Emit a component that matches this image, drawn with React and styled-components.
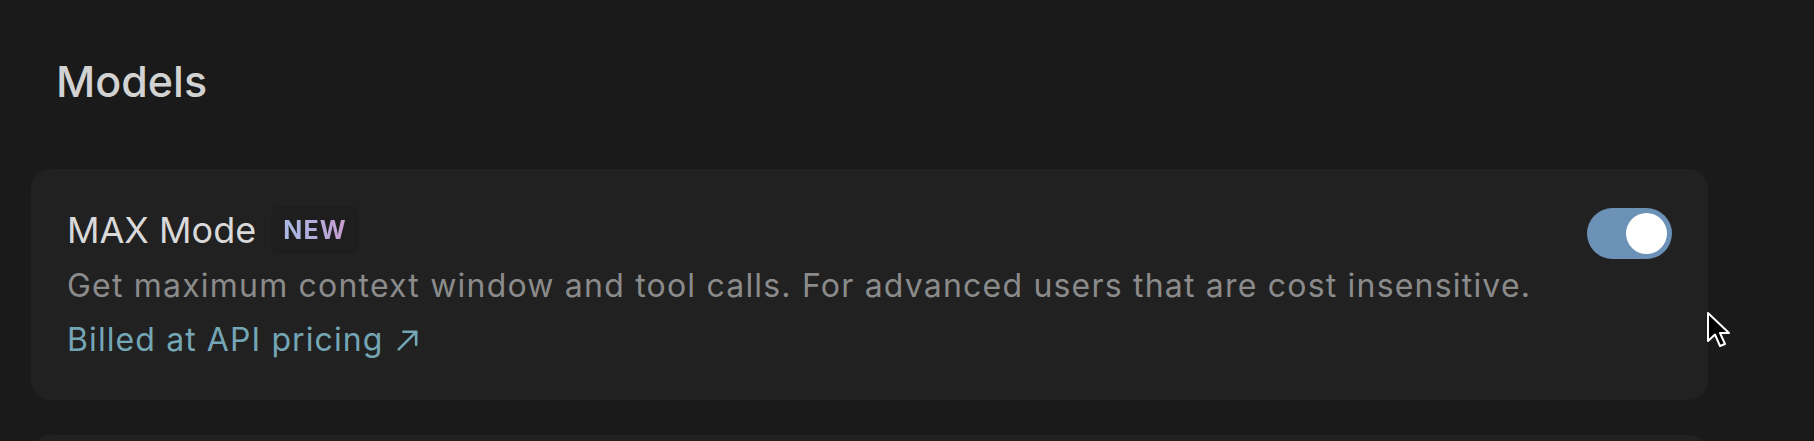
import styled, { createGlobalStyle } from "styled-components";

const GlobalStyle = createGlobalStyle`
  body {
    margin: 0;
    background: #1a1a1a;
    font-family: Inter, "Noto Sans", sans-serif;
    -webkit-font-smoothing: antialiased;
  }
`;

const Page = styled.div`
  position: relative;
  height: 441px;
  overflow: hidden;
  padding: 53px 106px 0 31px;
  box-sizing: border-box;
`;

const Heading = styled.h2`
  margin: 0 0 60px 25px;
  font-size: 43px;
  line-height: 56px;
  font-weight: 500;
  color: #d2d2d2;
`;

const Card = styled.div`
  display: flex;
  align-items: flex-start;
  justify-content: space-between;
  background: #212121;
  border-radius: 20px;
  padding: 36px 36px 33px 36px;
  margin-bottom: 35px;
  min-height: ${(p) => p.$minHeight || 0}px;
  box-sizing: border-box;
`;

const Info = styled.div`
  display: flex;
  flex-direction: column;
`;

const TitleRow = styled.div`
  display: flex;
  align-items: center;
  gap: 15px;
  height: 50px;
`;

const Title = styled.span`
  font-size: 36px;
  color: #d9d9d9;
`;

const Badge = styled.span`
  display: inline-flex;
  align-items: center;
  height: 48px;
  padding: 0 12px;
  border-radius: 8px;
  background: #1e1e1e;
  font-size: 25px;
  font-weight: 700;
  letter-spacing: 1.2px;
`;

const BadgeText = styled.span`
  background: linear-gradient(90deg, #a8b9e2 0%, #b7a9dc 60%, #c79ccc 100%);
  -webkit-background-clip: text;
  background-clip: text;
  color: transparent;
`;

const Desc = styled.p`
  margin: 4px 0 0;
  font-size: 32px;
  line-height: 54px;
  letter-spacing: 1.2px;
  color: #8b8b8b;
`;

const Link = styled.a`
  display: inline-flex;
  align-items: center;
  gap: 10px;
  font-size: 32px;
  line-height: 54px;
  letter-spacing: 1.1px;
  color: #74a6b6;
  text-decoration: none;
`;

const Toggle = styled.div`
  display: flex;
  align-items: center;
  justify-content: ${(p) => (p.$on ? "flex-end" : "flex-start")};
  width: 85px;
  height: 51px;
  margin-top: 3px;
  padding: 5px;
  box-sizing: border-box;
  border-radius: 26px;
  background: ${(p) => (p.$on ? "#6b92b6" : "#3a3a3a")};
  flex-shrink: 0;
`;

const Knob = styled.div`
  width: 41px;
  height: 41px;
  border-radius: 50%;
  background: #ffffff;
`;

const Pointer = styled.svg`
  position: absolute;
  left: 1706px;
  top: 311px;
`;

const ArrowUpRight = () => (
  <svg width="28" height="28" viewBox="0 0 24 24" fill="none" stroke="currentColor" strokeWidth="2.2" strokeLinecap="round" strokeLinejoin="round">
    <path d="M4 20 L19 5" />
    <path d="M8 5 H19 V16" />
  </svg>
);

export default function App() {
  return (
    <>
      <GlobalStyle />
      <Page>
        <Heading>Models</Heading>
        <Card>
          <Info>
            <TitleRow>
              <Title>MAX Mode</Title>
              <Badge>
                <BadgeText>NEW</BadgeText>
              </Badge>
            </TitleRow>
            <Desc>
              Get maximum context window and tool calls. For advanced users that are cost insensitive.
            </Desc>
            <Link href="#">
              Billed at API pricing
              <ArrowUpRight />
            </Link>
          </Info>
          <Toggle $on>
            <Knob />
          </Toggle>
        </Card>
        <Card $minHeight={120} />
        <Pointer width="26" height="38" viewBox="0 0 26 38">
          <path
            d="M2 2 L2 30 L9 23.5 L14 35 L19 33 L14 22 L23 22 Z"
            fill="#000"
            stroke="#fff"
            strokeWidth="2"
            strokeLinejoin="round"
          />
        </Pointer>
      </Page>
    </>
  );
}
